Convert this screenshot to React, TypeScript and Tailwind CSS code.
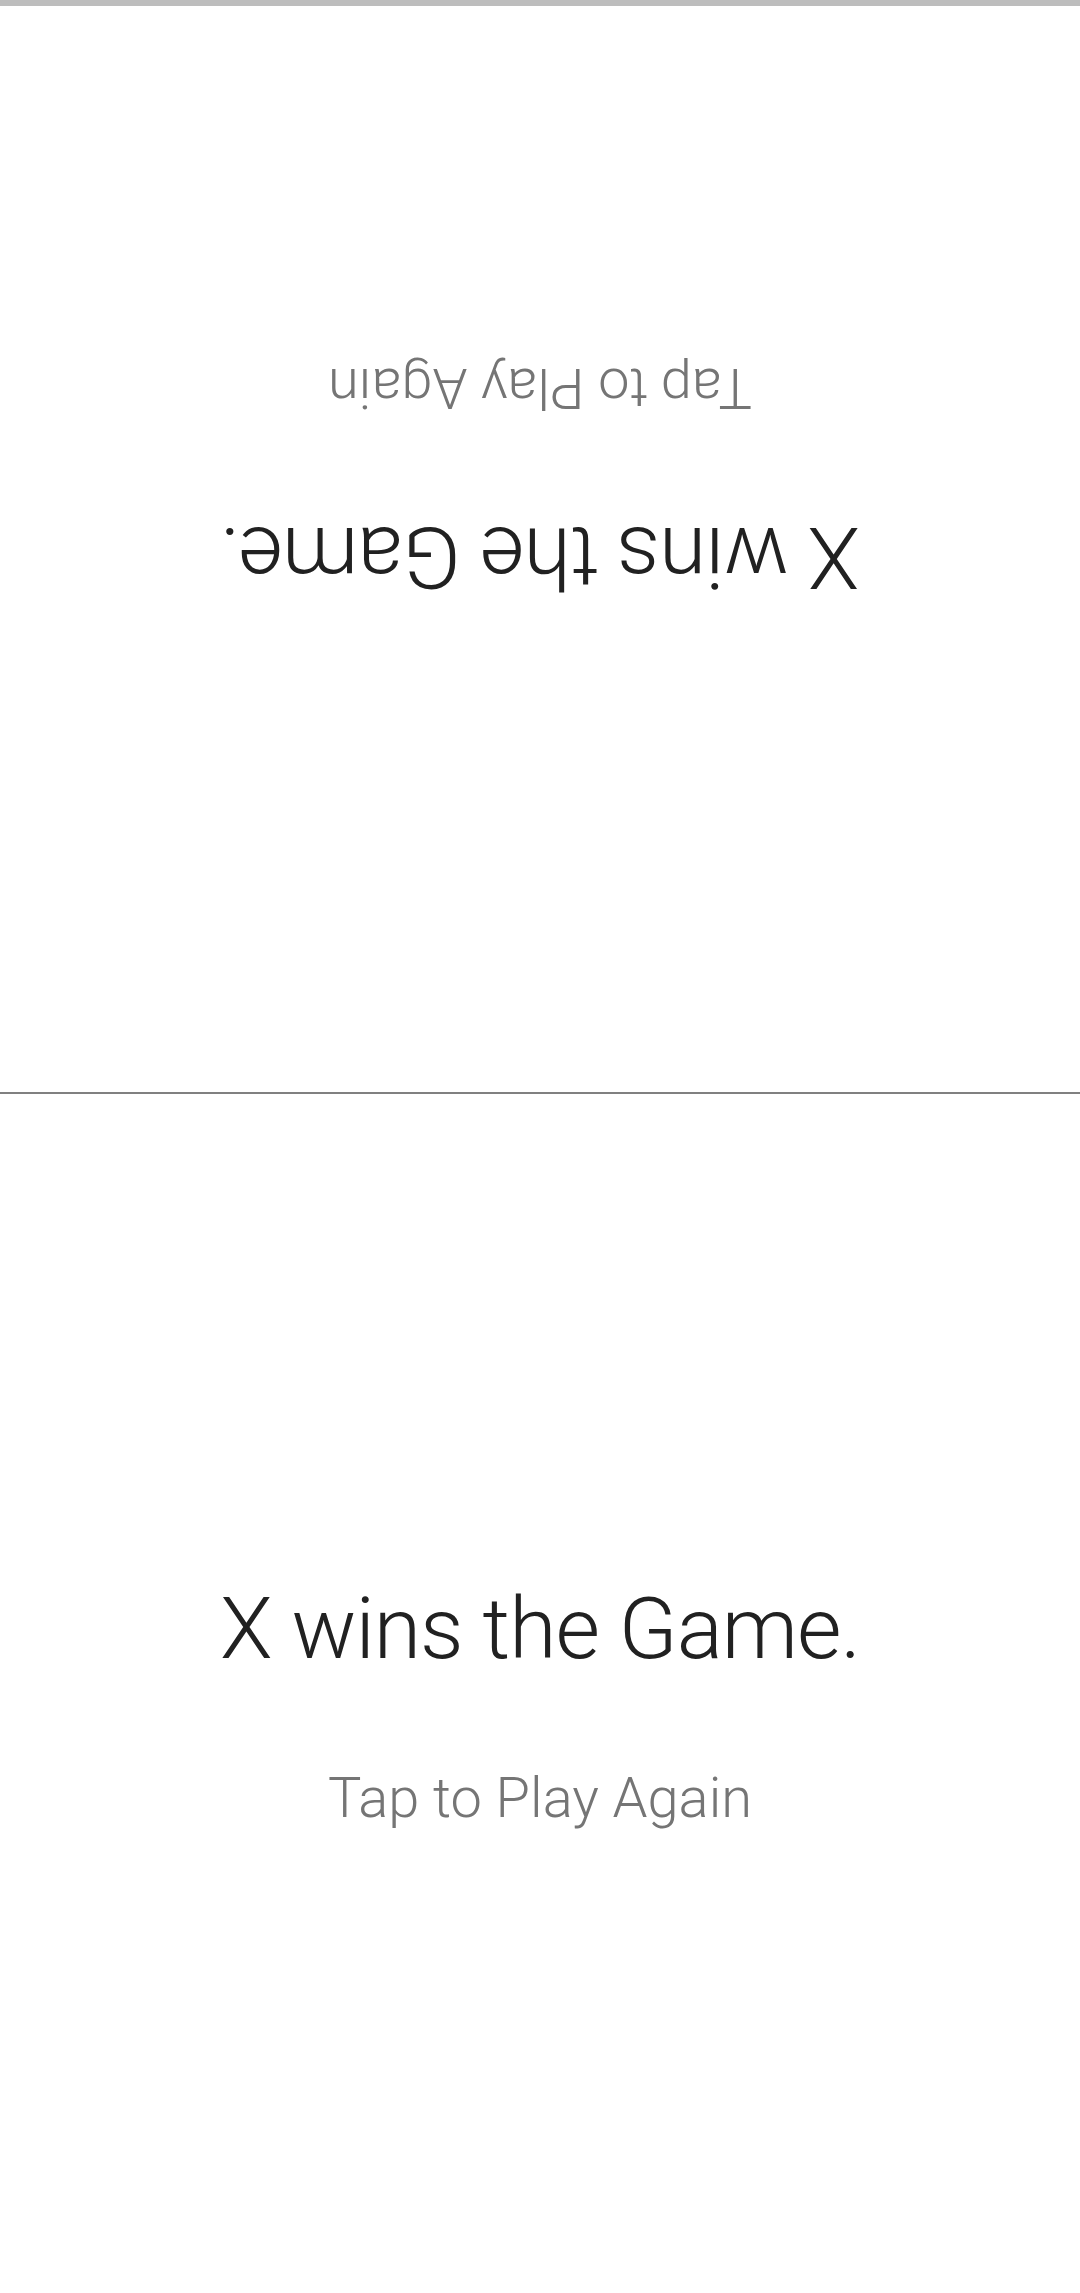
function ResultPanel({ flipped }: { flipped?: boolean }) {
  return (
    <div
      className={
        flipped
          ? "flex h-[1086px] rotate-180 flex-col items-center pt-[485px]"
          : "flex h-[1199px] flex-col items-center pt-[485px]"
      }
    >
      <p className="text-[86px] leading-[100px] font-light tracking-[-1px] text-[#212121]">X wins the Game.</p>
      <p className="mt-[87px] text-[56px] leading-[64px] font-light text-[#757575]">Tap to Play Again</p>
    </div>
  )
}

export default function App() {
  return (
    <div className="flex h-[2293px] w-[1080px] flex-col overflow-hidden bg-white font-['Roboto',_'Liberation_Sans',_sans-serif]">
      <div className="h-[6px] bg-[#bdbdbd]" />
      <ResultPanel flipped />
      <div className="h-[2px] bg-[#808080]" />
      <ResultPanel />
    </div>
  )
}
